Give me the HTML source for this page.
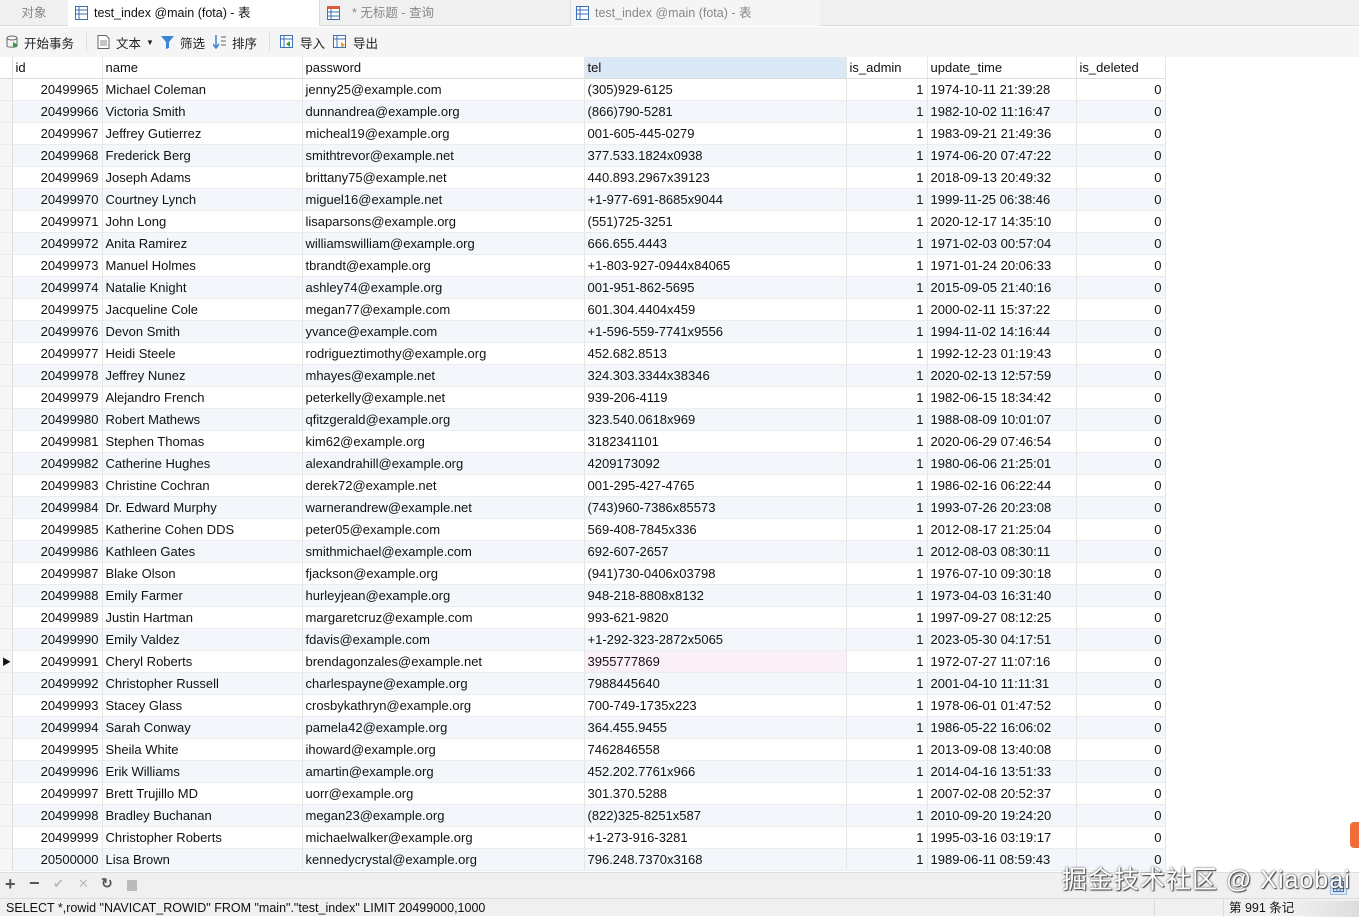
<!DOCTYPE html>
<html><head><meta charset="utf-8">
<style>
*{margin:0;padding:0;box-sizing:border-box}
body{width:1359px;height:916px;overflow:hidden;background:#fff;font-family:"Liberation Sans","Noto Sans CJK SC",sans-serif;font-size:13px;color:#111;position:relative}
.tabs{position:absolute;left:0;top:0;width:1359px;height:26px;background:#f0f0f0;border-bottom:1px solid #dcdcdc}
.tab{position:absolute;top:0;height:26px;line-height:26px;font-size:12.5px;color:#888}
.tb{position:absolute;top:27px;left:0;width:1359px;height:30px;background:#f5f5f5}
.tb span{position:absolute;top:6px;font-size:12.5px;color:#222}
.ic{position:absolute;width:13px;height:14px}
table{position:absolute;left:0;top:57px;border-collapse:collapse;table-layout:fixed}
td{height:22px;border-right:1px solid #e6e6e6;border-bottom:1px solid #ececec;padding:0 3px;white-space:nowrap;overflow:hidden;font-size:13px}
tr.h td{height:21px;background:#fff;border-bottom:1px solid #dcdcdc}
tr:nth-child(odd):not(.h) td{background:#f3f7fc}
td.r{text-align:right}
td.g{background:#f6f6f6!important;border-right:1px solid #ddd}
.bot{position:absolute;left:0;top:872px;width:1359px;height:26px;background:#f0f0f0;border-top:1px solid #ddd}
.st{position:absolute;left:0;top:898px;width:1359px;height:18px;background:#f0f0f0;border-top:1px solid #ddd;font-size:12.5px;line-height:18px;padding-left:6px}
</style></head><body>
<div class="tabs">
<div class="tab" style="left:0;width:68px;text-align:center">对象</div>
<div class="tab" style="left:68px;width:252px;background:#fff;color:#111;border-right:1px solid #ddd;padding-left:26px">test_index @main (fota) - 表</div>
<svg class="ic" style="left:75px;top:6px" viewBox="0 0 13 14"><rect x="0.5" y="0.5" width="12" height="13" fill="#fff" stroke="#3d6fb3"/><path d="M0 4h13M0 8h13M4 0v14" stroke="#3d6fb3"/></svg>
<div class="tab" style="left:320px;width:250px;padding-left:32px">* 无标题 - 查询</div>
<svg class="ic" style="left:327px;top:6px" viewBox="0 0 13 14"><rect x="0.5" y="0.5" width="12" height="13" fill="#fff" stroke="#3d6fb3"/><rect x="0" y="0" width="13" height="3" fill="#e05a3a"/><path d="M0 6h13M0 10h13M4 3v11" stroke="#3d6fb3"/></svg>
<div class="tab" style="left:570px;width:250px;padding-left:24px;border-left:1px solid #ddd;background:#f5f5f5">test_index @main (fota) - 表</div>
<svg class="ic" style="left:576px;top:6px" viewBox="0 0 13 14"><rect x="0.5" y="0.5" width="12" height="13" fill="#fff" stroke="#3d6fb3"/><path d="M0 4h13M0 8h13M4 0v14" stroke="#3d6fb3"/></svg>
</div>
<div class="tb">
<svg class="ic" style="left:6px;top:8px" viewBox="0 0 13 14"><ellipse cx="6" cy="3" rx="5" ry="2" fill="none" stroke="#666"/><path d="M1 3v8c0 1.5 10 1.5 10 0V3" fill="none" stroke="#666"/><path d="M7 7l5 3-5 3z" fill="#3a9a3a"/></svg>
<span style="left:24px">开始事务</span>
<div style="position:absolute;left:86px;top:6px;width:1px;height:18px;background:#ddd"></div>
<svg class="ic" style="left:97px;top:8px" viewBox="0 0 13 14"><path d="M1 .5h8l3 3v10H1z" fill="#fff" stroke="#666"/><path d="M3 6h7M3 8h7M3 10h7" stroke="#888"/></svg>
<span style="left:116px">文本</span><span style="left:146px;font-size:8px;top:11px">▼</span>
<svg class="ic" style="left:161px;top:8px" viewBox="0 0 13 14"><path d="M0 1h13L8 7v6l-3 1V7z" fill="#3a86d4"/></svg>
<span style="left:180px">筛选</span>
<svg class="ic" style="left:213px;top:8px" viewBox="0 0 13 14"><path d="M3 0v12M0 9l3 4 3-4" fill="none" stroke="#3a86d4" stroke-width="1.5"/><path d="M8 2h5M8 6h5M8 10h5" stroke="#666"/></svg>
<span style="left:232px">排序</span>
<div style="position:absolute;left:269px;top:6px;width:1px;height:18px;background:#ddd"></div>
<svg class="ic" style="left:280px;top:8px" viewBox="0 0 13 14"><rect x=".5" y=".5" width="12" height="12" fill="#fff" stroke="#3d6fb3"/><path d="M0 4h13M4 0v13" stroke="#3d6fb3"/><path d="M6 9l4-3v6z" fill="#3a9a3a"/></svg>
<span style="left:300px">导入</span>
<svg class="ic" style="left:333px;top:8px" viewBox="0 0 13 14"><rect x=".5" y=".5" width="12" height="12" fill="#fff" stroke="#3d6fb3"/><path d="M0 4h13M4 0v13" stroke="#3d6fb3"/><path d="M12 10l-4-3v6z" fill="#e8a020"/></svg>
<span style="left:353px">导出</span>
</div>
<table>
<colgroup><col style="width:12px"><col style="width:90px"><col style="width:200px"><col style="width:282px"><col style="width:262px"><col style="width:81px"><col style="width:149px"><col style="width:89px"></colgroup>
<tr class="h"><td class="g" style="background:#fff!important"></td><td>id</td><td>name</td><td>password</td><td style="background:#dbe9f7">tel</td><td>is_admin</td><td>update_time</td><td>is_deleted</td></tr>
<tr><td class="g"></td><td class="r">20499965</td><td>Michael Coleman</td><td>jenny25@example.com</td><td>(305)929-6125</td><td class="r">1</td><td>1974-10-11 21:39:28</td><td class="r">0</td></tr>
<tr><td class="g"></td><td class="r">20499966</td><td>Victoria Smith</td><td>dunnandrea@example.org</td><td>(866)790-5281</td><td class="r">1</td><td>1982-10-02 11:16:47</td><td class="r">0</td></tr>
<tr><td class="g"></td><td class="r">20499967</td><td>Jeffrey Gutierrez</td><td>micheal19@example.org</td><td>001-605-445-0279</td><td class="r">1</td><td>1983-09-21 21:49:36</td><td class="r">0</td></tr>
<tr><td class="g"></td><td class="r">20499968</td><td>Frederick Berg</td><td>smithtrevor@example.net</td><td>377.533.1824x0938</td><td class="r">1</td><td>1974-06-20 07:47:22</td><td class="r">0</td></tr>
<tr><td class="g"></td><td class="r">20499969</td><td>Joseph Adams</td><td>brittany75@example.net</td><td>440.893.2967x39123</td><td class="r">1</td><td>2018-09-13 20:49:32</td><td class="r">0</td></tr>
<tr><td class="g"></td><td class="r">20499970</td><td>Courtney Lynch</td><td>miguel16@example.net</td><td>+1-977-691-8685x9044</td><td class="r">1</td><td>1999-11-25 06:38:46</td><td class="r">0</td></tr>
<tr><td class="g"></td><td class="r">20499971</td><td>John Long</td><td>lisaparsons@example.org</td><td>(551)725-3251</td><td class="r">1</td><td>2020-12-17 14:35:10</td><td class="r">0</td></tr>
<tr><td class="g"></td><td class="r">20499972</td><td>Anita Ramirez</td><td>williamswilliam@example.org</td><td>666.655.4443</td><td class="r">1</td><td>1971-02-03 00:57:04</td><td class="r">0</td></tr>
<tr><td class="g"></td><td class="r">20499973</td><td>Manuel Holmes</td><td>tbrandt@example.org</td><td>+1-803-927-0944x84065</td><td class="r">1</td><td>1971-01-24 20:06:33</td><td class="r">0</td></tr>
<tr><td class="g"></td><td class="r">20499974</td><td>Natalie Knight</td><td>ashley74@example.org</td><td>001-951-862-5695</td><td class="r">1</td><td>2015-09-05 21:40:16</td><td class="r">0</td></tr>
<tr><td class="g"></td><td class="r">20499975</td><td>Jacqueline Cole</td><td>megan77@example.com</td><td>601.304.4404x459</td><td class="r">1</td><td>2000-02-11 15:37:22</td><td class="r">0</td></tr>
<tr><td class="g"></td><td class="r">20499976</td><td>Devon Smith</td><td>yvance@example.com</td><td>+1-596-559-7741x9556</td><td class="r">1</td><td>1994-11-02 14:16:44</td><td class="r">0</td></tr>
<tr><td class="g"></td><td class="r">20499977</td><td>Heidi Steele</td><td>rodrigueztimothy@example.org</td><td>452.682.8513</td><td class="r">1</td><td>1992-12-23 01:19:43</td><td class="r">0</td></tr>
<tr><td class="g"></td><td class="r">20499978</td><td>Jeffrey Nunez</td><td>mhayes@example.net</td><td>324.303.3344x38346</td><td class="r">1</td><td>2020-02-13 12:57:59</td><td class="r">0</td></tr>
<tr><td class="g"></td><td class="r">20499979</td><td>Alejandro French</td><td>peterkelly@example.net</td><td>939-206-4119</td><td class="r">1</td><td>1982-06-15 18:34:42</td><td class="r">0</td></tr>
<tr><td class="g"></td><td class="r">20499980</td><td>Robert Mathews</td><td>qfitzgerald@example.org</td><td>323.540.0618x969</td><td class="r">1</td><td>1988-08-09 10:01:07</td><td class="r">0</td></tr>
<tr><td class="g"></td><td class="r">20499981</td><td>Stephen Thomas</td><td>kim62@example.org</td><td>3182341101</td><td class="r">1</td><td>2020-06-29 07:46:54</td><td class="r">0</td></tr>
<tr><td class="g"></td><td class="r">20499982</td><td>Catherine Hughes</td><td>alexandrahill@example.org</td><td>4209173092</td><td class="r">1</td><td>1980-06-06 21:25:01</td><td class="r">0</td></tr>
<tr><td class="g"></td><td class="r">20499983</td><td>Christine Cochran</td><td>derek72@example.net</td><td>001-295-427-4765</td><td class="r">1</td><td>1986-02-16 06:22:44</td><td class="r">0</td></tr>
<tr><td class="g"></td><td class="r">20499984</td><td>Dr. Edward Murphy</td><td>warnerandrew@example.net</td><td>(743)960-7386x85573</td><td class="r">1</td><td>1993-07-26 20:23:08</td><td class="r">0</td></tr>
<tr><td class="g"></td><td class="r">20499985</td><td>Katherine Cohen DDS</td><td>peter05@example.com</td><td>569-408-7845x336</td><td class="r">1</td><td>2012-08-17 21:25:04</td><td class="r">0</td></tr>
<tr><td class="g"></td><td class="r">20499986</td><td>Kathleen Gates</td><td>smithmichael@example.com</td><td>692-607-2657</td><td class="r">1</td><td>2012-08-03 08:30:11</td><td class="r">0</td></tr>
<tr><td class="g"></td><td class="r">20499987</td><td>Blake Olson</td><td>fjackson@example.org</td><td>(941)730-0406x03798</td><td class="r">1</td><td>1976-07-10 09:30:18</td><td class="r">0</td></tr>
<tr><td class="g"></td><td class="r">20499988</td><td>Emily Farmer</td><td>hurleyjean@example.org</td><td>948-218-8808x8132</td><td class="r">1</td><td>1973-04-03 16:31:40</td><td class="r">0</td></tr>
<tr><td class="g"></td><td class="r">20499989</td><td>Justin Hartman</td><td>margaretcruz@example.com</td><td>993-621-9820</td><td class="r">1</td><td>1997-09-27 08:12:25</td><td class="r">0</td></tr>
<tr><td class="g"></td><td class="r">20499990</td><td>Emily Valdez</td><td>fdavis@example.com</td><td>+1-292-323-2872x5065</td><td class="r">1</td><td>2023-05-30 04:17:51</td><td class="r">0</td></tr>
<tr><td class="g" style="font-size:9px;padding:0 0 0 2px">▶</td><td class="r">20499991</td><td>Cheryl Roberts</td><td>brendagonzales@example.net</td><td style="background:#fcf0f8!important">3955777869</td><td class="r">1</td><td>1972-07-27 11:07:16</td><td class="r">0</td></tr>
<tr><td class="g"></td><td class="r">20499992</td><td>Christopher Russell</td><td>charlespayne@example.org</td><td>7988445640</td><td class="r">1</td><td>2001-04-10 11:11:31</td><td class="r">0</td></tr>
<tr><td class="g"></td><td class="r">20499993</td><td>Stacey Glass</td><td>crosbykathryn@example.org</td><td>700-749-1735x223</td><td class="r">1</td><td>1978-06-01 01:47:52</td><td class="r">0</td></tr>
<tr><td class="g"></td><td class="r">20499994</td><td>Sarah Conway</td><td>pamela42@example.org</td><td>364.455.9455</td><td class="r">1</td><td>1986-05-22 16:06:02</td><td class="r">0</td></tr>
<tr><td class="g"></td><td class="r">20499995</td><td>Sheila White</td><td>ihoward@example.org</td><td>7462846558</td><td class="r">1</td><td>2013-09-08 13:40:08</td><td class="r">0</td></tr>
<tr><td class="g"></td><td class="r">20499996</td><td>Erik Williams</td><td>amartin@example.org</td><td>452.202.7761x966</td><td class="r">1</td><td>2014-04-16 13:51:33</td><td class="r">0</td></tr>
<tr><td class="g"></td><td class="r">20499997</td><td>Brett Trujillo MD</td><td>uorr@example.org</td><td>301.370.5288</td><td class="r">1</td><td>2007-02-08 20:52:37</td><td class="r">0</td></tr>
<tr><td class="g"></td><td class="r">20499998</td><td>Bradley Buchanan</td><td>megan23@example.org</td><td>(822)325-8251x587</td><td class="r">1</td><td>2010-09-20 19:24:20</td><td class="r">0</td></tr>
<tr><td class="g"></td><td class="r">20499999</td><td>Christopher Roberts</td><td>michaelwalker@example.org</td><td>+1-273-916-3281</td><td class="r">1</td><td>1995-03-16 03:19:17</td><td class="r">0</td></tr>
<tr><td class="g"></td><td class="r">20500000</td><td>Lisa Brown</td><td>kennedycrystal@example.org</td><td>796.248.7370x3168</td><td class="r">1</td><td>1989-06-11 08:59:43</td><td class="r">0</td></tr>
</table>
<div style="position:absolute;left:1350px;top:822px;width:9px;height:26px;background:#f26b3a;border-radius:4px 0 0 4px"></div>
<div class="bot">
<span style="position:absolute;left:5px;top:1px;font-size:18px;color:#555;font-weight:bold">+</span>
<span style="position:absolute;left:29px;top:0px;font-size:18px;color:#555;font-weight:bold">−</span>
<span style="position:absolute;left:53px;top:3px;font-size:13px;color:#bbb">✔</span>
<span style="position:absolute;left:78px;top:3px;font-size:13px;color:#bbb">✕</span>
<span style="position:absolute;left:101px;top:2px;font-size:14px;color:#555;font-weight:bold">↻</span>
<div style="position:absolute;left:127px;top:7px;width:10px;height:11px;background:#bbb"></div>
<svg style="position:absolute;left:1330px;top:5px" width="17" height="17" viewBox="0 0 17 17"><rect x=".5" y=".5" width="16" height="16" fill="#dbe9f7" stroke="#9bbde0"/><rect x="3.5" y="3.5" width="10" height="10" fill="none" stroke="#3d6fb3"/><path d="M3 7h11M3 10h11M7 3v11M10 3v11" stroke="#3d6fb3"/></svg>
</div>
<div style="position:absolute;left:1062px;top:860px;font-size:25px;color:#fff;letter-spacing:1px;text-shadow:0 0 2px #444,1px 1px 1px #444;font-family:'Liberation Sans','Noto Sans CJK SC',sans-serif">掘金技术社区 @ Xiaobai</div>
<div class="st">SELECT *,rowid "NAVICAT_ROWID" FROM "main"."test_index" LIMIT 20499000,1000
<div style="position:absolute;left:1154px;top:0;width:1px;height:18px;background:#ddd"></div>
<div style="position:absolute;left:1223px;top:0;width:1px;height:18px;background:#ddd"></div>
<span style="position:absolute;left:1229px;top:0">第 991 条记</span>
<div style="position:absolute;left:1290px;top:2px;width:69px;height:16px;background:linear-gradient(90deg,rgba(240,240,240,0),#ddd)"></div>
</div>
</body></html>
